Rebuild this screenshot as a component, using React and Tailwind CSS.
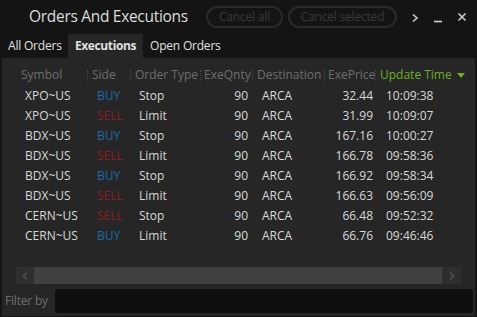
import React from "react";

const rows = [
  ["XPO~US", "BUY", "Stop", "90", "ARCA", "32.44", "10:09:38"],
  ["XPO~US", "SELL", "Limit", "90", "ARCA", "31.99", "10:09:07"],
  ["BDX~US", "BUY", "Stop", "90", "ARCA", "167.16", "10:00:27"],
  ["BDX~US", "SELL", "Limit", "90", "ARCA", "166.78", "09:58:36"],
  ["BDX~US", "BUY", "Stop", "90", "ARCA", "166.92", "09:58:34"],
  ["BDX~US", "SELL", "Limit", "90", "ARCA", "166.63", "09:56:09"],
  ["CERN~US", "SELL", "Stop", "90", "ARCA", "66.48", "09:52:32"],
  ["CERN~US", "BUY", "Limit", "90", "ARCA", "66.76", "09:46:46"],
];

const cols = "grid grid-cols-[16px_69px_43px_70px_52px_72px_51px_1fr]";

const Sep = () => (
  <span className="absolute left-0 top-[4px] h-[12px] border-l border-dotted border-[#454545]" />
);

const App = () => {
  return (
    <div
      className="w-[477px] h-[317px] bg-[#141414] flex flex-col overflow-hidden"
      style={{ fontFamily: '"Open Sans", "Noto Sans", sans-serif' }}
    >
      {/* Title bar */}
      <div className="h-[34px] shrink-0 flex items-center pl-[29px] pr-[10px] whitespace-nowrap">
        <span className="w-[177px] shrink-0 text-[15.5px] text-[#dcdcdc] tracking-[-0.3px]">Orders And Executions</span>
        <div className="flex gap-[5px]">
          <button className="w-[77px] h-[22px] rounded-full border-2 border-[#2a2a2a] text-[12px] text-[#3a3a3a] leading-none tracking-[-0.2px]">
            Cancel all
          </button>
          <button className="w-[109px] h-[22px] rounded-full border-2 border-[#2a2a2a] text-[12px] text-[#3a3a3a] leading-none tracking-[-0.2px]">
            Cancel selected
          </button>
        </div>
        <div className="ml-auto flex items-center gap-[14px]">
          <svg width="8" height="10" viewBox="0 0 8 10" className="mt-[1px]">
            <path d="M2 1.5 L6 5 L2 8.5" stroke="#d0d0d0" strokeWidth="1.6" fill="none" />
          </svg>
          <svg width="10" height="10" viewBox="0 0 10 10" className="mt-[2px]">
            <path d="M1 8.5 H9" stroke="#d0d0d0" strokeWidth="1.6" />
          </svg>
          <svg width="10" height="10" viewBox="0 0 10 10">
            <path d="M1.5 1.5 L8.5 8.5 M8.5 1.5 L1.5 8.5" stroke="#d0d0d0" strokeWidth="1.5" />
          </svg>
        </div>
      </div>

      {/* Tabs */}
      <div className="h-[24px] shrink-0 flex items-stretch pl-[2px] text-[12px] text-[#e0e0e0] whitespace-nowrap tracking-[-0.2px]">
        <div className="w-[66px] flex items-center pl-[6px]">All Orders</div>
        <div className="w-[75px] flex items-center justify-center bg-[#262626] font-bold tracking-[-0.4px]">Executions</div>
        <div className="flex items-center pl-[7px]">Open Orders</div>
      </div>

      {/* Panel */}
      <div className="flex-1 ml-[2px] mr-[2px] mb-[1px] bg-[#262626] flex flex-col">
        <div className={`${cols} mt-[7px] h-[20px] items-center text-[12px] text-[#6e6e6e] whitespace-nowrap`}>
          <div />
          <div className="relative pl-[3px]">Symbol</div>
          <div className="relative pl-[5px]"><Sep />Side</div>
          <div className="relative pl-[5px]"><Sep />Order Type</div>
          <div className="relative pl-[4px]"><Sep />ExeQnty</div>
          <div className="relative pl-[5px]"><Sep />Destination</div>
          <div className="relative pl-[4px]"><Sep />ExePrice</div>
          <div className="relative pl-[5px] text-[#6fae2a] flex items-center">
            <Sep />Update Time
            <svg width="8" height="5" viewBox="0 0 8 5" className="ml-[5px]">
              <path d="M0 0 H8 L4 5 Z" fill="#6fae2a" />
            </svg>
          </div>
        </div>
        <div className="mt-[1px]">
          {rows.map((r, i) => (
            <div key={i} className={`${cols} h-[20px] items-center text-[12px] text-[#d8d8d8] whitespace-nowrap`}>
              <div />
              <div className="pl-[7px]">{r[0]}</div>
              <div className={`pl-[10px] ${r[1] === "BUY" ? "text-[#1d6aa6]" : "text-[#8e1c26]"}`}>{r[1]}</div>
              <div className="pl-[9px]">{r[2]}</div>
              <div className="text-right pr-[4px]">{r[3]}</div>
              <div className="pl-[10px]">{r[4]}</div>
              <div className="text-right pr-[2px]">{r[5]}</div>
              <div className="pl-[11px]">{r[6]}</div>
            </div>
          ))}
        </div>

        {/* Horizontal scrollbar */}
        <div className="mt-[21px] mx-[14px] h-[17px] flex bg-[#404040]">
          <div className="w-[18px] bg-[#2e2e2e] flex items-center justify-center">
            <svg width="8" height="10" viewBox="0 0 8 10">
              <path d="M6 1.5 L2.5 5 L6 8.5" stroke="#4a4a4a" strokeWidth="2" fill="none" />
            </svg>
          </div>
          <div className="flex-1" />
          <div className="w-[19px] bg-[#2e2e2e] flex items-center justify-center">
            <svg width="8" height="10" viewBox="0 0 8 10">
              <path d="M2 1.5 L5.5 5 L2 8.5" stroke="#4a4a4a" strokeWidth="2" fill="none" />
            </svg>
          </div>
        </div>

        {/* Filter */}
        <div className="mt-[5px] flex items-center pl-[3px] pr-[2px]">
          <span className="text-[12px] text-[#6e6e6e] w-[50px] whitespace-nowrap tracking-[-0.2px]">Filter by</span>
          <div className="flex-1 h-[24px] bg-[#0f0f0f] rounded-[3px]" />
        </div>
      </div>
    </div>
  );
};

export default App;
